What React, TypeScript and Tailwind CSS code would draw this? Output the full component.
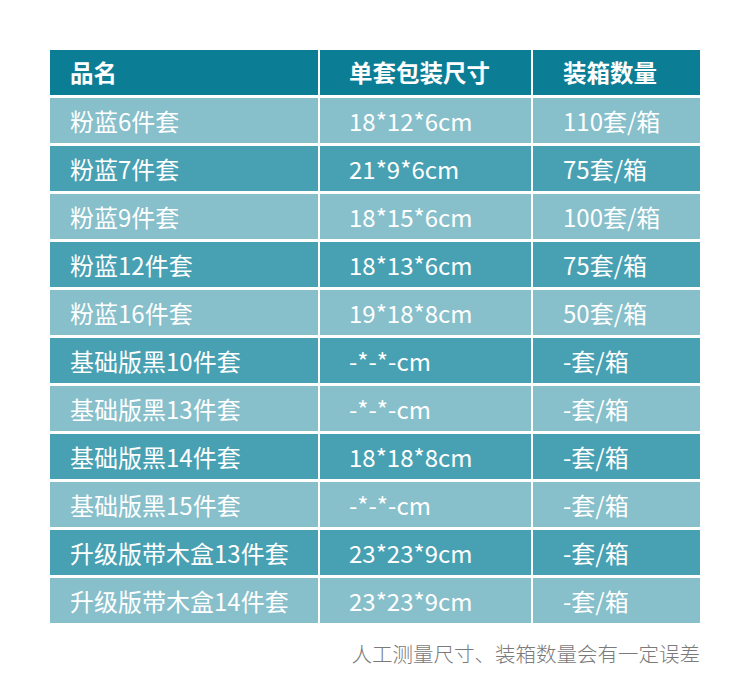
import React from 'react';

const rows: [string, string, string][] = [
  ['粉蓝6件套', '18*12*6cm', '110套/箱'],
  ['粉蓝7件套', '21*9*6cm', '75套/箱'],
  ['粉蓝9件套', '18*15*6cm', '100套/箱'],
  ['粉蓝12件套', '18*13*6cm', '75套/箱'],
  ['粉蓝16件套', '19*18*8cm', '50套/箱'],
  ['基础版黑10件套', '-*-*-cm', '-套/箱'],
  ['基础版黑13件套', '-*-*-cm', '-套/箱'],
  ['基础版黑14件套', '18*18*8cm', '-套/箱'],
  ['基础版黑15件套', '-*-*-cm', '-套/箱'],
  ['升级版带木盒13件套', '23*23*9cm', '-套/箱'],
  ['升级版带木盒14件套', '23*23*9cm', '-套/箱'],
];

const font = { fontFamily: '"Noto Sans CJK SC", "Noto Sans", sans-serif' };

export default function App() {
  return (
    <div className="w-[750px] h-[700px] bg-white px-[50px] pt-[50px]" style={font}>
      <div className="flex flex-col gap-[3px] w-[650px]">
        {/* header */}
        <div className="flex gap-[2px] h-[45px] text-white text-[23.5px] font-bold">
          <div className="w-[268px] bg-[#0b7e95] flex items-center pl-[20px]">品名</div>
          <div className="w-[211px] bg-[#0b7e95] flex items-center pl-[29px]">单套包装尺寸</div>
          <div className="w-[167px] bg-[#0b7e95] flex items-center pl-[30px]">装箱数量</div>
        </div>
        {rows.map((r, i) => {
          const bg = i % 2 === 0 ? 'bg-[#87bfcb]' : 'bg-[#48a1b3]';
          return (
            <div key={i} className="flex gap-[2px] h-[45px] text-white text-[24px]">
              <div className={`w-[268px] ${bg} flex items-center pl-[20px]`}>{r[0]}</div>
              <div className={`w-[211px] ${bg} flex items-center pl-[29px]`}>{r[1]}</div>
              <div className={`w-[167px] ${bg} flex items-center pl-[30px]`}>{r[2]}</div>
            </div>
          );
        })}
      </div>
      <div className="w-[650px] mt-[16px] text-right text-[20.5px] leading-[28px] text-[#7a7a7a] font-light">
        人工测量尺寸、装箱数量会有一定误差
      </div>
    </div>
  );
}
